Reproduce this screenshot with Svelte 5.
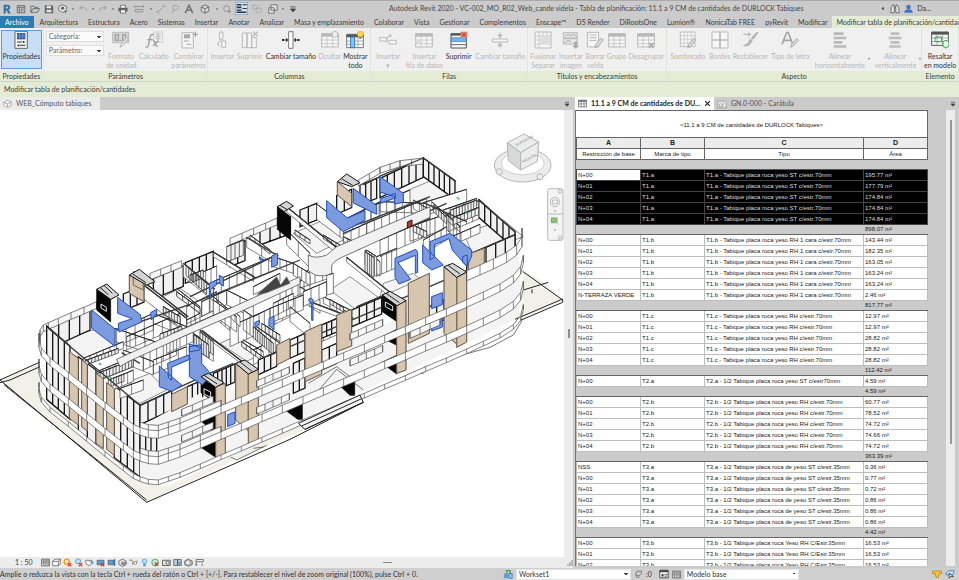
<script>
  // ---- quick access bar -------------------------------------------------
  const g = '#5d6266';
  const icons = {
    revit: '<path d="M4 2h9q7 0 7 6 0 4-4 6l5 9h-6l-4-8H9v8H4z M9 6v5h3q3 0 3-3t-3-2z" fill="#2f6fae" fill-rule="evenodd"/>',
    home: `<path d="M3 4h18v17H3z M3 8h18 M8 8v13 M11 12h7 M11 16h7" fill="none" stroke="${g}" stroke-width="2"/>`,
    open: `<path d="M2 20V5h7l2 3h8v3 M2 20l5-9h16l-5 9z" fill="none" stroke="${g}" stroke-width="2"/>`,
    save: `<path d="M2 3h17l3 3v16H2z" fill="${g}"/><path d="M6 4h11v6H6z M6 14h12v6H6z" fill="#e6e6e6"/>`,
    sync: `<path d="M11 2l9 4v9l-9 5-9-5V6z" fill="#f2f2f2" stroke="${g}" stroke-width="2"/><circle cx="11" cy="10" r="4" fill="${g}"/><path d="M14 16h8l-4 7z" fill="#3a9c4a"/>`,
    undo: '<path d="M4 9h11q6 1 6 8M4 9l6-5M4 9l6 5" fill="none" stroke="#9a9a9a" stroke-width="2"/>',
    redo: '<path d="M20 9H9q-6 1-6 8M20 9l-6-5M20 9l-6 5" fill="none" stroke="#9a9a9a" stroke-width="2"/>',
    print: `<path d="M6 9V3h12v6" fill="#fff" stroke="${g}" stroke-width="2"/><path d="M1 9h22v9H1z" fill="${g}"/><path d="M6 14h12v8H6z" fill="#fff" stroke="${g}" stroke-width="2"/>`,
    measure: '<path d="M1 6h22M1 3v6M23 3v6M3 13h18v6H3z" fill="none" stroke="#8c8c8c" stroke-width="2"/>',
    line: '<path d="M4 20L20 4M1 17l6 6M17 1l6 6" stroke="#8c8c8c" stroke-width="2"/>',
    tag: '<path d="M5 22l5-9M8 13a7 6 0 1 1 6 2z" fill="none" stroke="#999" stroke-width="2"/>',
    letterA: '<path d="M3 22L12 3l9 19M7 15h10" fill="none" stroke="#777" stroke-width="4"/>',
    cube: `<path d="M12 2l9 5v10l-9 5-9-5V7z M3 7l9 5 9-5 M12 12v10" fill="#dcdcdc" stroke="${g}" stroke-width="2"/>`,
    section: '<circle cx="11" cy="11" r="7" fill="none" stroke="#888" stroke-width="2"/><path d="M14 16h8l-4 6z" fill="#888"/>',
    thin: '<path d="M0 0h24v24H0z" fill="#cfe4f7" stroke="#4a90cf" stroke-width="2"/><path d="M3 5h9M3 10h9M3 19h18" stroke="#333" stroke-width="3"/><path d="M14 5h8M14 12h8M3 15h9" stroke="#333" stroke-width="2"/>',
    close: '<path d="M2 3h12v9H2zM10 10h12v11H10z" fill="none" stroke="#999" stroke-width="2" stroke-dasharray="3 2"/>',
    swap: `<path d="M7 2h15v13H7z M2 9h13v13H2z" fill="#e8e8e8" stroke="${g}" stroke-width="2"/>`,
    more: '<path d="M6 7h12M6 12h12l-6 7z" fill="#444" stroke="#444" stroke-width="2"/>',
    arrow: '<path d="M7 10h10l-5 6z" fill="#555"/>',
    binoc: '<path d="M3 9l3-6h4v18H2zM21 9l-3-6h-4v18h8zM10 9h4" fill="#eee" stroke="#555" stroke-width="2"/>',
    user: '<circle cx="12" cy="8" r="6" fill="#3b74c9"/><path d="M1 23q0-9 11-9t11 9z" fill="#3b74c9"/>',
    sheet: '<path d="M2 5h16l4 4v12H2z" fill="#eee" stroke="#999" stroke-width="2"/><path d="M6 12h7v6H6zM15 8v10" fill="none" stroke="#aaa" stroke-width="2"/>',
    grid: '<path d="M1 3h22v18H1z" fill="#fff" stroke="#555" stroke-width="2"/><path d="M1 3h22v5H1z" fill="#6f7f8f"/><path d="M1 13h22M8 8v13M16 8v13" stroke="#777" stroke-width="2"/>',
    back: '<path d="M16 6v12l-7-6z" fill="#333"/>',
    x: '<path d="M4 4l16 16M20 4L4 20" stroke="#222" stroke-width="4"/>',
    house: '<path d="M2 9l10-6 10 5v9l-10 6-10-6z M12 13v9 M2 9l10 4 10-5" fill="#f5f5f5" stroke="#999" stroke-width="2"/>',
    // view control bar
    pattern: '<path d="M1 3h22v18H1z" fill="#ddd" stroke="#555" stroke-width="2"/><path d="M1 8h22M1 13h22M7 3v18M13 3v18M19 3v18" stroke="#777" stroke-width="2"/>',
    box: '<path d="M2 9l5-6h15v11l-5 7H2z M2 9h15v12 M17 9l5-6" fill="#fff" stroke="#555" stroke-width="2"/>',
    sun: '<circle cx="10" cy="10" r="7" fill="#ffe9a8" stroke="#e69a20" stroke-width="3"/><path d="M13 13l9 9m0-9l-9 9" stroke="#d43a2c" stroke-width="3"/>',
    shadow: '<circle cx="11" cy="9" r="7" fill="#bfe0f5" stroke="#5a8aa8" stroke-width="2"/><path d="M13 13l9 9m0-9l-9 9" stroke="#d43a2c" stroke-width="3"/>',
    teapot: '<path d="M2 6h10v3l6-3v5q0 9-7 9-8 0-9-8z" fill="#fff" stroke="#555" stroke-width="2"/><circle cx="19" cy="12" r="4" fill="#5aa9e6"/>',
    cropx: '<path d="M3 6h18v12H3z" fill="#5aa0d8" stroke="#555" stroke-width="2"/><path d="M13 13l9 9m0-9l-9 9" stroke="#d43a2c" stroke-width="3"/>',
    crop: '<path d="M3 6h14v12H3z" fill="#5aa0d8" stroke="#555" stroke-width="2"/><path d="M20 3v18" stroke="#2f72b5" stroke-width="4"/>',
    lock: '<path d="M2 8l10-5 10 5v9l-10 6-10-6z" fill="#e4e4e4" stroke="#555" stroke-width="2"/><path d="M9 10h12v9H9z" fill="#8a8a8a"/>',
    glasses: '<path d="M1 6q8-3 10 6 6 8 11-5M11 12l-2 6" fill="none" stroke="#555" stroke-width="2"/><circle cx="17" cy="13" r="4" fill="#fff" stroke="#777" stroke-width="2"/>',
    bulb: '<circle cx="12" cy="9" r="6" fill="#bfe3ff" stroke="#3f93d6" stroke-width="2"/><path d="M9 16h6v6H9z" fill="#4f8fc0"/>',
    world: '<circle cx="11" cy="12" r="9" fill="#cfe9d2" stroke="#3c8f52" stroke-width="2"/><path d="M10 12l9 9m0-9l-9 9" stroke="#d43a2c" stroke-width="3"/>',
    cam: '<path d="M1 6h21v14H1z" fill="#ddd" stroke="#444" stroke-width="2"/><circle cx="15" cy="13" r="4" fill="#fff" stroke="#444" stroke-width="2"/>',
    blocks: '<path d="M2 4h10v16H2z M12 4h10v16H12z" fill="#bfc8d0" stroke="#555" stroke-width="2"/><circle cx="17" cy="13" r="4" fill="#4f9ad8"/>',
    shapes: '<path d="M2 8l9-5 11 5v9l-9 5-11-4z" fill="#b9b9b9" stroke="#555" stroke-width="2"/><circle cx="10" cy="12" r="4" fill="#fff"/>',
    dims: '<path d="M3 21V4h19v6M3 10h19M1 18h5M19 14v8" fill="none" stroke="#555" stroke-width="2"/>',
    users: '<path d="M9 12V4h8v6" fill="none" stroke="#4a9a50" stroke-width="3"/><path d="M2 11h10v11H2z" fill="#5aa0d8"/><path d="M14 11h8v11h-8z" fill="#9ac7e8" stroke="#2d78b8" stroke-width="2"/>',
    link: '<path d="M8 3h12v6l-6 6H5v-5z M5 17q6 6 10 1" fill="#ccc" stroke="#666" stroke-width="2"/>',
    option: '<path d="M2 3h20v18H2z" fill="#fff" stroke="#333" stroke-width="2"/><path d="M2 3h20v5H2z M6 12h5v6H6z" fill="#444"/><path d="M13 13h7M13 17h7" stroke="#444" stroke-width="2"/>',
    filterY: '<path d="M1 5h22v6h-6l-2 9h-5L8 11H1z" fill="#ffc83a" stroke="#b8820c" stroke-width="2"/>',
    pick: '<path d="M2 9l7-5h13l-3 10H2z" fill="#bfe0f5" stroke="#3b86bd" stroke-width="2"/><path d="M10 10v12l4-4h6z" fill="#fff" stroke="#333" stroke-width="2"/>'
  };

  // ---- ribbon glyphs, drawn on a 54 unit square -------------------------
  const t = '#b9b9b9';
  const sheetG = (c) => `<path d="M2 8h50v40H2z" fill="#f6f6f6" stroke="${c}" stroke-width="3"/><path d="M2 8h50v9H2z" fill="${c}"/><path d="M2 27h50M2 38h50M18 17v31M35 17v31" stroke="${c}" stroke-width="2"/>`;
  const big = {
    props: '<path d="M9 1h37v51H9z" fill="#f7f7f7" stroke="#666" stroke-width="3"/><path d="M15 6h25v19H15z" fill="#27579a"/><path d="M15 12h25M15 18h25M23 6v19M32 6v19" stroke="#7fa6d8" stroke-width="2"/><path d="M15 33h16M24 43h16" stroke="#333" stroke-width="3"/><path d="M33 29v8l7-4zM22 39v8l-7-4z" fill="#333"/>',
    format: `<path d="M2 4h48v31H2z" fill="#d6d6d6" stroke="${t}" stroke-width="3"/><path d="M10 11h9v17h-9zM32 11h9v17h-9z" fill="none" stroke="#a0a0a0" stroke-width="4"/><path d="M25 27v3" stroke="#999" stroke-width="4"/><path d="M50 22L32 44l-8 5 3-9 16-20z" fill="#e8e8e8" stroke="${t}" stroke-width="3"/>`,
    fx: `<path d="M26 3h26v30H26z" fill="#f4f4f4" stroke="${t}" stroke-width="2"/><path d="M31 9h16M31 16h16M31 23h16M39 9v22" stroke="${t}" stroke-width="3"/><path d="M26 12q-8-5-10 5l-6 26q-2 8-8 4M7 26h16M24 29q5 0 7 9t8 7M40 29L24 45" fill="none" stroke="#9c9c9c" stroke-width="4"/>`,
    combine: `<path d="M6 5h34v46H6z" fill="#f6f6f6" stroke="${t}" stroke-width="3"/><path d="M12 10h18v12H12z" fill="#aaa"/><path d="M12 30h15M20 40h14" stroke="#aaa" stroke-width="3"/><path d="M46 2v16M38 10h16" stroke="#a5a5a5" stroke-width="4"/>`,
    insCol: `<path d="M20 3h10v22H20zM26 30h12v19H26z" fill="#f4f4f4" stroke="${t}" stroke-width="3"/><path d="M18 46l-4-10 12-10" fill="none" stroke="${t}" stroke-width="3"/>`,
    delCol: `<path d="M4 6h14v44H4zM18 6h14v44H18zM32 20h14v30H32z" fill="#f4f4f4" stroke="${t}" stroke-width="3"/><path d="M36 2l14 14M50 2L36 16" stroke="${t}" stroke-width="4"/>`,
    widthCol: '<path d="M20 2h13v50H20z" fill="#fdfdfd" stroke="#777" stroke-width="3"/><path d="M4 27h12M37 27h12" stroke="#333" stroke-width="3"/><path d="M12 20v14l7-7zM42 20v14l-7-7z" fill="#333"/><circle cx="3" cy="27" r="3"/><circle cx="50" cy="27" r="3"/>',
    hide: sheetG(t) + `<circle cx="42" cy="10" r="9" fill="#eee" stroke="${t}" stroke-width="3"/>`,
    show: '<path d="M2 10h50v40H2z" fill="#fff" stroke="#777" stroke-width="3"/><path d="M2 10h50v9H2z" fill="#585858"/><path d="M2 30h50M2 40h50M36 18v32" stroke="#888" stroke-width="2"/><path d="M14 18h12v32H14z" fill="#8cc4ef" stroke="#2b7ec2" stroke-width="3"/><circle cx="43" cy="9" r="9" fill="#ffd64a" stroke="#e0a31c" stroke-width="2"/><path d="M40 18h6v6h-6z" fill="#777"/>',
    insRow: `<path d="M2 20h20v10H2zM30 28h22v11H30z" fill="#f6f6f6" stroke="${t}" stroke-width="3"/><path d="M24 34V18l12-4M32 8l6 6-6 5" fill="none" stroke="${t}" stroke-width="3"/>`,
    data: sheetG(t) + '<path d="M2 26h14v12H2z" fill="#ddd"/>',
    delRow: '<path d="M3 8h46v43H3z" fill="#fff" stroke="#555" stroke-width="3"/><path d="M3 8h46v6H3z" fill="#555"/><path d="M3 20h46v12H3z" fill="#74b4ea" stroke="#3c7fb8" stroke-width="2"/><path d="M3 41h46" stroke="#666" stroke-width="3"/><path d="M32 2h20v18H32z" fill="#e88473"/><path d="M36 5l12 12M48 5L36 17" stroke="#b32e1c" stroke-width="3"/>',
    heightRow: `<path d="M4 24h46v9H4z" fill="#f6f6f6" stroke="${t}" stroke-width="3"/><path d="M27 4v12M27 38v12M21 12h12l-6 8zM21 44h12l-6-8z" fill="${t}" stroke="${t}" stroke-width="3"/>`,
    merge: `<path d="M3 3h48v48H3z" fill="#f6f6f6" stroke="${t}" stroke-width="3"/><path d="M3 15h48M15 3v48M15 39h36M39 3v12M27 3v12M3 27h12M3 39h12" stroke="${t}" stroke-width="2"/><path d="M17 17h32v20H17z" fill="#dedede"/>`,
    image: `<path d="M4 5h42v16H4zM4 23h42v16H4z" fill="#e6e6e6" stroke="${t}" stroke-width="3"/><path d="M8 18l10-9 9 6 8-6 9 8M8 36l10-8 9 5" fill="none" stroke="#aaa" stroke-width="3"/><path d="M36 32v12h-6l11 9 11-9h-6V32z" fill="#aaa"/>`,
    clear: `<path d="M4 4h34v44H4z" fill="#f6f6f6" stroke="${t}" stroke-width="3"/><path d="M10 12h22M10 20h22M10 28h22" stroke="${t}" stroke-width="3"/><path d="M52 26L36 46l-9 4 2-9 15-19z" fill="#ddd" stroke="#aaa" stroke-width="3"/>`,
    group: sheetG(t),
    ungroup: sheetG(t) + '<path d="M36 36l14 14M50 36L36 50" stroke="#a5a5a5" stroke-width="4"/>',
    shade: '<path d="M4 3h44v44H4z" fill="#f6f6f6" stroke="#c0c0c0" stroke-width="3"/><path d="M4 14h44M4 25h44M4 36h44M15 3v44M26 3v44M37 3v44" stroke="#c4c4c4" stroke-width="2"/><path d="M50 26L36 46l-9 4 2-9 15-19z" fill="#ddd" stroke="#aaa" stroke-width="3"/>',
    borders: `<path d="M3 3h48v48H3z" fill="#f6f6f6" stroke="${t}" stroke-width="3"/><path d="M27 3v48M3 27h48" stroke="${t}" stroke-width="5"/>`,
    reset: `<path d="M4 10h20l-5-5M24 10l-5 6" fill="none" stroke="${t}" stroke-width="4"/><path d="M50 4L34 26l-8-4L44 3zM32 28l-9-5-5 12-16 10q22 6 30-17z" fill="#b4b4b4"/>`,
    font: '<path d="M3 40L17 5h5l13 35M9 28h20" fill="none" stroke="#a8a8a8" stroke-width="5"/><path d="M52 28L38 44l-9 5 3-9 15-17z" fill="#ddd" stroke="#aaa" stroke-width="3"/>',
    alignH: '<path d="M8 4h30v8H8zM8 17h38v8H8zM8 30h26v8H8zM8 43h38v7H8z" fill="#b9b9b9"/>',
    alignV: '<path d="M14 4h26v8H14zM8 17h38v8H8zM14 30h26v8H14zM10 43h34v7H10z" fill="#bdbdbd"/>',
    model: '<path d="M2 3h50v40H2z" fill="#fff" stroke="#555" stroke-width="3"/><path d="M2 3h50v8H2z" fill="#555"/><path d="M2 21h50M2 32h50M18 11v32M35 11v32" stroke="#888" stroke-width="2"/><path d="M12 18h20v14H12z" fill="none" stroke="#39a047" stroke-width="3"/><path d="M36 32l9-4 9 5v12l-9 6-9-5z" fill="#e8f7ea" stroke="#39a047" stroke-width="3"/>'
  };

  const quick = ['revit', 'home', 'open', 'save', 'sync', 'arrow', 'undo', 'arrow', 'redo', 'arrow', 'print', 'measure', 'arrow', 'line', 'tag', 'letterA', 'cube', 'arrow', 'section', 'thin', 'close', 'swap', 'arrow', 'more'];
  const wide = new Set(['measure', 'cube', 'close']);

  const tabs = ['Arquitectura', 'Estructura', 'Acero', 'Sistemas', 'Insertar', 'Anotar', 'Analizar', 'Masa y emplazamiento', 'Colaborar', 'Vista', 'Gestionar', 'Complementos', 'Enscape™', 'D5 Render', 'DiRootsOne', 'Lumion®', 'NonicaTab FREE', 'pyRevit', 'Modificar'];

  // size is the share of the ribbon width
  const panels = [
    { title: 'Propiedades', size: 43, items: [{ icon: 'props', size: 43, label: ['Propiedades'], on: true, active: true }] },
    { title: 'Parámetros', size: 165, fields: ['Categoría:', 'Parámetro:'], items: [
      { icon: 'format', size: 34, label: ['Formato', 'de unidad'] },
      { icon: 'fx', size: 33, label: ['Calculado'] },
      { icon: 'combine', size: 39, label: ['Combinar', 'parámetros'] }] },
    { title: 'Columnas', size: 163, items: [
      { icon: 'insCol', size: 28, label: ['Insertar'] },
      { icon: 'delCol', size: 27, label: ['Suprimir'] },
      { icon: 'widthCol', size: 56, label: ['Cambiar tamaño'], on: true },
      { icon: 'hide', size: 22, label: ['Ocultar'] },
      { icon: 'show', size: 30, label: ['Mostrar', 'todo'], on: true }] },
    { title: 'Filas', size: 157, items: [
      { icon: 'insRow', size: 34, label: ['Insertar', '▾'] },
      { icon: 'data', size: 39, label: ['Insertar', 'fila de datos'] },
      { icon: 'delRow', size: 30, label: ['Suprimir'], on: true },
      { icon: 'heightRow', size: 54, label: ['Cambiar tamaño'] }] },
    { title: 'Títulos y encabezamientos', size: 139, items: [
      { icon: 'merge', size: 30, label: ['Fusionar', 'Separar'] },
      { icon: 'image', size: 26, label: ['Insertar', 'imagen'] },
      { icon: 'clear', size: 23, label: ['Borrar', 'celda'] },
      { icon: 'group', size: 20, label: ['Grupo'] },
      { icon: 'ungroup', size: 40, label: ['Desagrupar'] }] },
    { title: 'Aspecto', size: 256, items: [
      { icon: 'shade', size: 42, label: ['Sombreado'] },
      { icon: 'borders', size: 22, label: ['Bordes'] },
      { icon: 'reset', size: 40, label: ['Restablecer'] },
      { icon: 'font', size: 40, label: ['Tipo de letra'] },
      { icon: 'alignH', size: 60, label: ['Alinear', 'horizontalmente'], drop: true },
      { icon: 'alignV', size: 52, label: ['Alinear', 'verticalmente'], drop: true }] },
    { title: 'Elemento', size: 36, items: [{ icon: 'model', size: 36, label: ['Resaltar', 'en modelo'], on: true }] }
  ];

  // ---- schedule ---------------------------------------------------------
  const levels = ['N+00', 'N+01', 'N+02', 'N+03', 'N+04'];
  const groups = [
    { mark: 'T1.a', type: 'T1.a - Tabique placa roca yeso ST c/estr.70mm', levels, areas: ['195.77', '177.79', '174.84', '174.84', '174.84'], total: '898.07', selected: true },
    { mark: 'T1.b', type: 'T1.b - Tabique placa roca yeso RH 1 cara c/estr.70mm', levels: [...levels, 'N-TERRAZA VERDE'], areas: ['143.44', '182.35', '163.05', '163.24', '163.24', '2.46'], total: '817.77' },
    { mark: 'T1.c', type: 'T1.c - Tabique placa roca yeso RH c/estr.70mm', levels, areas: ['12.97', '12.97', '28.82', '28.82', '28.82'], total: '112.42' },
    { mark: 'T2.a', type: 'T2.a - 1/2 Tabique placa roca yeso ST c/estr70mm', levels: ['N+00'], areas: ['4.59'], total: '4.59' },
    { mark: 'T2.b', type: 'T2.b - 1/2 Tabique placa roca yeso RH c/estr.70mm', levels, areas: ['60.77', '78.52', '74.72', '74.66', '74.72'], total: '363.39' },
    { mark: 'T3.a', type: 'T3.a - 1/2 Tabique placa roca de yeso ST c/estr.35mm', levels: ['NSS', ...levels], areas: ['0.36', '0.77', '0.72', '0.86', '0.86', '0.86'], total: '4.42' },
    { mark: 'T3.b', type: 'T3.b - 1/2 Tabique placa roca Yeso RH C/Estr.35mm', levels: ['N+00', 'N+01', 'N+02'], areas: ['16.53', '16.53', '16.53'] }
  ];

  // ---- isometric model --------------------------------------------------
  // A wall runs along its top edge (x1,y1)-(x2,y2), drops h, and has n bays.
  function wall([x1, y1, x2, y2, h, n = 1]) {
    let d = `M${x1} ${y1}L${x2} ${y2}v${h}L${x1} ${y1 + h}z`;
    for (let i = 1; i < n; i++) {
      const k = i / n;
      d += `M${Math.round(x1 + (x2 - x1) * k)} ${Math.round(y1 + (y2 - y1) * k)}v${h}`;
    }
    return d;
  }
  const cap = ([x1, y1, x2, y2]) => `M${x1} ${y1}L${x2} ${y2}`;

  // A band follows a run of points, with a post at every point.
  function band(pts, dy, h) {
    const top = pts.map(([x, y]) => `${x} ${y + dy}`);
    const low = pts.map(([x, y]) => `${x} ${y + dy + h}`).reverse();
    return `M${top.join('L')}L${low.join('L')}z` + pts.map(([x, y]) => `M${x} ${y + dy}v${h}`).join('');
  }

  const along = (x1, y1, x2, y2, n) =>
    Array.from({ length: n + 1 }, (_, i) => [Math.round(x1 + ((x2 - x1) * i) / n), Math.round(y1 + ((y2 - y1) * i) / n)]);

  const westRun = [[117, 985], [117, 1005], [124, 1030], [150, 1060], [205, 1103], [260, 1148], [315, 1193], [370, 1236], [400, 1259]];
  const corner = [[420, 1268], [445, 1276], [475, 1278], [505, 1268]];
  const frontRun = along(540, 1256, 1400, 885, 14);
  const eastRun = [[1450, 862], [1500, 838], [1540, 812], [1562, 785], [1570, 752]];
  const parapet = [...westRun, ...corner, ...frontRun, ...eastRun];
  const cornerRail = [...corner, ...frontRun.slice(0, 3)];
  const eastTop = [[1400, 812], [1440, 795], [1480, 777], [1520, 757], [1550, 735], [1566, 710], [1566, 684]];
  const backRail = [[120, 1010], [120, 990], [130, 975], [145, 968], ...along(175, 955, 290, 905, 3)];

  // balcony balustrades set back from the slab edge
  const balconies = [
    along(545, 1228, 640, 1188, 3), along(545, 1306, 640, 1266, 3),
    along(770, 1142, 868, 1100, 4), along(770, 1222, 868, 1180, 4),
    along(1050, 1000, 1148, 958, 4), along(1050, 1078, 1148, 1036, 4),
    along(1230, 995, 1320, 955, 3)
  ];

  // kind, origin x, origin y, list of walls
  const shell = [
    ['glass', 0, 420, [[145, 565, 270, 508, 62, 4], [370, 462, 432, 436, 50, 3], [460, 415, 550, 377, 62, 3], [556, 368, 640, 334, 62, 4], [690, 320, 735, 302, 60, 2], [780, 265, 870, 232, 50, 3]]],
    ['rail', 0, 420, [[450, 400, 545, 362, 20, 3], [690, 295, 832, 234, 20, 4]]],
    ['glass', 840, 390, [[60, 240, 110, 220, 50, 2], [170, 197, 215, 178, 55, 2], [240, 165, 290, 145, 60, 3], [300, 145, 430, 84, 58, 6]]],
    ['rail', 840, 390, [[235, 150, 300, 112, 18, 2], [300, 112, 360, 92, 18, 2], [360, 92, 430, 84, 18, 2]]],
    ['glass', 840, 390, [[430, 84, 525, 152, 56, 6], [596, 210, 705, 305, 52, 6]]]
  ];

  const rooms = [
    ['plain', 0, 420, [
      [432, 436, 560, 535, 42, 1], [400, 400, 560, 528, 8, 1], [550, 370, 640, 442, 40, 4], [640, 336, 760, 410, 14, 3], [740, 292, 830, 345, 30, 2],
      [600, 400, 650, 378, 44, 3], [640, 425, 735, 385, 44, 4], [735, 385, 830, 345, 44, 4], [560, 500, 650, 455, 52, 4], [530, 445, 600, 500, 22, 3],
      [350, 570, 460, 520, 50, 4], [460, 520, 560, 560, 30, 2], [380, 590, 540, 520, 40, 6], [490, 500, 540, 535, 30, 3], [345, 565, 480, 610, 40, 3],
      [605, 485, 680, 450, 44, 3], [680, 450, 760, 490, 44, 2], [760, 440, 840, 400, 24, 1], [640, 470, 700, 520, 60, 5], [560, 540, 600, 520, 40, 3]]],
    ['plain', 840, 390, [
      [20, 230, 165, 350, 16, 1], [110, 222, 180, 275, 46, 1], [190, 270, 300, 215, 44, 4], [250, 240, 390, 180, 40, 6], [300, 215, 440, 220, 30, 3],
      [190, 310, 260, 280, 36, 3], [260, 280, 440, 205, 38, 8], [400, 210, 450, 240, 26, 2], [300, 330, 450, 265, 50, 6], [390, 290, 490, 255, 44, 4],
      [255, 360, 300, 395, 44, 3], [290, 380, 350, 355, 58, 4], [430, 330, 500, 290, 40, 4], [200, 382, 340, 495, 14, 1],
      [60, 430, 150, 400, 44, 4], [0, 480, 90, 440, 40, 5], [60, 470, 120, 510, 40, 3], [130, 500, 220, 545, 20, 3], [20, 300, 90, 370, 44, 2],
      [430, 218, 560, 178, 40, 1], [455, 215, 540, 290, 16, 4], [490, 240, 590, 205, 20, 5], [505, 250, 596, 212, 55, 5], [515, 320, 600, 283, 26, 3], [500, 250, 540, 290, 48, 4]]],
    ['plain', 0, 990, [
      [250, 85, 370, 35, 20, 6], [290, 125, 400, 80, 30, 6], [330, 150, 400, 120, 34, 4], [360, 175, 430, 150, 30, 2], [370, 60, 460, 95, 40, 3], [430, 70, 530, 25, 50, 5], [460, 90, 560, 50, 42, 4],
      [500, 40, 580, 5, 30, 4], [580, 10, 640, 50, 44, 5], [600, 0, 760, 120, 8, 1], [690, -10, 790, -55, 60, 4], [730, 30, 790, 65, 24, 3], [730, -60, 830, 10, 60, 5],
      [780, -45, 870, -90, 50, 4], [760, 60, 830, 25, 44, 3]]],
    ['plain', 510, 660, [
      [180, 262, 210, 290, 30, 2], [250, 290, 300, 265, 50, 3], [300, 265, 400, 225, 44, 4], [310, 250, 370, 220, 40, 4], [400, 215, 470, 185, 44, 3], [420, 245, 540, 290, 14, 1],
      [360, 260, 420, 310, 44, 1], [260, 320, 330, 370, 40, 5], [130, 240, 200, 290, 46, 4], [370, 130, 420, 160, 36, 4], [310, 110, 370, 130, 30, 3], [470, 165, 490, 160, 60, 1],
      [480, 250, 540, 280, 14, 3], [420, 330, 500, 295, 50, 4], [560, 260, 635, 228, 50, 4], [590, 90, 620, 110, 60, 4]]],
    // kitchens and wet rooms
    ['dense', 510, 660, [
      [48, 135, 110, 190, 32, 8], [60, 165, 100, 150, 24, 5], [250, 320, 310, 370, 34, 9], [275, 310, 330, 345, 20, 5], [90, 335, 130, 365, 40, 5], [170, 80, 220, 60, 46, 4],
      [20, 215, 90, 265, 14, 4], [215, 365, 285, 415, 14, 5], [585, 95, 612, 112, 60, 4], [480, 238, 520, 262, 14, 4], [375, 30, 420, 60, 12, 3], [240, 45, 300, 90, 12, 4]]],
    ['dense', 840, 390, [
      [460, 225, 500, 262, 20, 5], [512, 240, 590, 210, 26, 9], [520, 262, 596, 232, 22, 7], [190, 320, 240, 345, 14, 4], [130, 315, 180, 345, 12, 4], [400, 285, 440, 305, 20, 4]]],
    ['dense', 0, 990, [
      [255, 92, 355, 55, 14, 10], [292, 130, 395, 90, 22, 11], [325, 150, 372, 132, 22, 6], [582, 14, 626, 44, 40, 6], [480, 12, 545, -12, 24, 6], [490, -70, 540, -40, 22, 6]]],
    ['glass', 840, 390, [[560, 376, 705, 314, 62, 5]]],
    ['glass', 0, 990, [[420, 226, 515, 182, 58, 4], [562, 170, 608, 150, 52, 3], [640, 138, 705, 108, 30, 4]]],
    ['glass', 510, 660, [[130, 460, 195, 432, 54, 5], [265, 420, 320, 395, 44, 3], [360, 360, 405, 340, 55, 2], [455, 315, 500, 296, 40, 3], [545, 270, 635, 232, 50, 4]]]
  ];

  // main partitions and party walls, drawn as a heavy cut line
  const cuts = 'M432 856L560 955M400 822L565 950M550 790L645 868M640 756L765 832M740 712L835 768M860 620L1010 742M1040 772L1180 885M605 990L770 1118M930 905L1060 955M1270 608L1400 665M350 990L565 915 900 780M570 890L830 765M1030 690L1290 590M1100 715L1340 610M365 1058L420 1090M420 1216L620 1124 700 1090M800 1070L1400 812M1270 474L1368 545M1436 598L1548 698M1400 768L1545 704M1136 530L1270 474M1090 555L1140 530M145 985L420 1216M520 1000L690 925';

  const westFace = [
    ['glass', 60, 870, [[80, 108, 150, 168, 220, 4], [175, 200, 228, 240, 225, 2], [283, 288, 360, 346, 215, 4]]]
  ];
  const southFace = [
    [420, 1300, 470, 1312, 50, 3], [880, 1090, 915, 1074, 90, 2], [965, 1050, 1010, 1030, 60, 2], [1288, 920, 1332, 900, 60, 2]
  ];

  // upright panels: tan cladding on both faces
  const tanParts = [
    [388, 825, 432, 850, 55], [400, 815, 430, 830, 40],
    [1012, 545, 1055, 580, 40],
    [208, 1055, 235, 1075, 200], [245, 1080, 262, 1093, 200], [288, 1120, 310, 1136, 210], [320, 1148, 343, 1166, 200],
    [515, 1183, 562, 1160, 52],
    [707, 1090, 745, 1122, 170], [745, 1122, 775, 1108, 220], [647, 1160, 676, 1150, 215],
    [830, 1035, 870, 1015, 60], [915, 995, 965, 972, 150], [1010, 945, 1055, 928, 110],
    [1190, 910, 1218, 900, 210], [1225, 850, 1288, 820, 180], [1332, 800, 1370, 832, 200], [1370, 832, 1400, 816, 210], [1405, 762, 1453, 745, 62]
  ];
  const tanWalls = tanParts.map(wall).join('');
  // fine vertical boarding over the cladding
  const boards = tanParts.map(([x1, y1, x2, y2, h]) => wall([x1, y1, x2, y2, h, Math.max(2, Math.round(Math.abs(x2 - x1) / 6))])).join('');

  const blacks = [
    'M290 868l42 30v68l-42 -36z', 'M832 620l40 30v70l-40 -32z',
    'M603 1130l44 32v46l-44 -30z', 'M603 1262l44 -20v62z', 'M600 1340l47 -20v52z',
    'M1147 885l44 32v48l-44 -30z', 'M1144 1012l46 -24v48z', 'M1144 1088l46 -22v56z',
    'M853 1228l40 -18 14 -6v54h-14z', 'M1010 1148l40 -18 14 -6v62h-14z'
  ];

  const blues = [
    'M980 602l62 52 53 -22v28l-65 35 -50 -42z', 'M1060 565l70 52v26l-70 -34z', 'M1140 530l70 50v27l-26 5v-22l-44 -14z', 'M1142 596l44 -16 v14l-44 16z',
    'M1185 775l62 -27 6 9v60l-7 3v-54l-52 22 38 50 -35 14 -12 -20z', 'M1268 735l62 60 -35 15 -27 -22z', 'M1290 725l60 -25 65 50v18l-14 32 -44 -50 -10 -34 -44 18v38l-13 8z',
    'M1295 890l32 -12v36l-32 12z', 'M1295 965l32 -12v28l-32 12z', 'M1388 770l14 -5v32l-14 -10z',
    'M275 930l70 57v52l-70 -54z', 'M353 892l68 52 4 22 -68 30 -2 -26 42 -14 -44 -16z', 'M452 938l18 -10v12l-16 20z',
    'M628 850l22 -10v14l-18 14v24h-4z', 'M658 826l12 6v26l-12 -8z', 'M815 768l18 -8v34l-18 8z', 'M778 770l14 10h-12z',
    'M764 968l14 -7v10l-12 12z', 'M807 956l15 -8v42l-15 -14z', 'M568 1040l38 -6 -8 16 -30 6z', 'M930 894l9 5v62h-4v-52l-10 -8z',
    'M478 1098l68 58 -30 18 -38 -14z', 'M503 1090l62 -25 6 12 -56 24v40l-10 -8z', 'M568 1032l37 12v46l30 34 -28 30 -39 -24z', 'M683 1244l22 -8v34l-22 10z'
  ];

  const floors = [
    'M210 1010l75 -22 60 50v20l-70 30 -90 -30z', 'M480 895l60 -30 80 55 -60 30z', 'M880 700l90 -40 60 60 -80 40z', 'M1180 590l140 -60 40 70 -60 30z',
    'M1390 700l120 -40 60 50 -150 55z', 'M990 870l60 -40 110 80 -70 36z', 'M660 1030l80 -36 80 50 -80 40z', 'M400 1140l50 -20 50 50 -80 40 -60 -20z', 'M1150 850l90 -30 20 18 -120 54z'
  ];

  let scheme = $state('Modelo base');
  let workset = $state('Workset1');
</script>

{#snippet ico(name, size = 8)}
  <svg class="ico" width={size} height={size} viewBox="0 0 24 24" aria-hidden="true">{@html icons[name]}</svg>
{/snippet}

<div class="app">
  <header class="titlebar">
    <div class="quick">
      {#each quick as name}
        <button class:wide={wide.has(name)} class:tiny={name === 'arrow'} aria-label={name}>{@render ico(name, name === 'arrow' ? 6 : name === 'thin' ? 13 : 10)}</button>
      {/each}
    </div>
    <h1>Autodesk Revit 2020 - VC-002_MO_R02_Web_cande videla - Tabla de planificación: 11.1 a 9 CM de cantidades de DURLOCK Tabiques</h1>
    <div class="account">
      {@render ico('back', 7)}
      {@render ico('binoc', 10)}
      {@render ico('user', 9)}
      <span>Da...</span>
    </div>
  </header>

  <nav class="tabs">
    <a class="file" href="#archivo">Archivo</a>
    {#each tabs as tab}<a href="#{tab}">{tab}</a>{/each}
    <a class="current" href="#tabla">Modificar tabla de planificación/cantidades</a>
  </nav>

  <div class="ribbon">
    {#each panels as panel}
      <section style="flex-grow: {panel.size}">
        <div class="tools">
          {#if panel.fields}
            <div class="fields">
              {#each panel.fields as f}
                <select aria-label={f}><option>{f}</option></select>
              {/each}
            </div>
          {/if}
          {#each panel.items as it}
            <button class="tool" class:on={it.on} class:active={it.active} class:drop={it.drop} style="flex-grow: {it.size}">
              <svg width="18" height="18" viewBox="0 0 54 54" aria-hidden="true">{@html big[it.icon]}</svg>
              {#each it.label as l}<span>{l}</span>{/each}
            </button>
          {/each}
        </div>
        <h2>{panel.title}</h2>
      </section>
    {/each}
  </div>

  <div class="context">Modificar tabla de planificación/cantidades</div>

  <main>
    <section class="pane model">
      <div class="doctabs">
        <button class="doc soft">{@render ico('house', 9)}<span>WEB_Cómputo tabiques</span></button>
        <button class="menu" aria-label="Vistas">{@render ico('more', 8)}</button>
      </div>
      <div class="stage">
        <div class="canvas">
          <svg class="iso" viewBox="0 330 1692 1341" preserveAspectRatio="xMinYMin slice" role="img" aria-label="Vista 3D del edificio">
            <path class="ground" d="M0 1140L120 1086 700 1000 1000 1200 915 1288 704 1380 440 1507z" />
            <path class="ground" d="M1565 812L1640 850 1688 903 1545 965z" />
            <path class="edge" d="M0 1140L120 1086M0 1148L30 1140 120 1100M12 1154L440 1500M440 1507L870 1318 1090 1207M0 1140L440 1507M1545 958L1688 897v10L1545 968M1565 812L1688 900M1570 870L1645 847M1596 880L1596 868" />
            <path class="line" d="M1070 1195L1230 1120 1270 1120 1285 1100 1360 1072 1470 1042 1540 1005 1566 962M1232 1114L1262 1114 1280 1094M690 1370l20 10 90 -44M760 1345l30 -4" />
            <path class="body" d="M118 990L145 968 290 905V868L320 852 355 885 388 825 430 815 545 782 690 715 832 654V620L862 605 1010 545 1040 522 1075 540 1200 482 1270 470 1365 540 1400 570V600L1430 595 1545 695 1568 740V930L1400 1040 500 1460 420 1440 120 1180z" />

            <path class="floor" d={floors.join('')} />
            {#each shell as [kind, ox, oy, list]}
              <path class={kind} transform="translate({ox} {oy})" d={list.map(wall).join('')} />
            {/each}
            <path class="rail" d={band(backRail, 0, 20)} />
            {#each westFace as [kind, ox, oy, list]}
              <path class={kind} transform="translate({ox} {oy})" d={list.map(wall).join('')} />
            {/each}
            {#each rooms as [kind, ox, oy, list]}
              <path class={kind} transform="translate({ox} {oy})" d={list.map(wall).join('')} />
              <path class="cap" transform="translate({ox} {oy})" d={list.map(cap).join('')} />
            {/each}
            <path class="cut" d={cuts} />

            <!-- corridor -->
            <path class="hall" d="M350 1078L520 1000 690 925 900 830v22L700 945 560 1005 385 1085 360 1100z" />
            <path class="hall" d="M925 765Q945 778 980 765L1010 740 1290 620v32L1030 770Q995 785 995 800v20Q975 832 945 825L925 812z" />
            <path class="stair" d="M770 885L830 830 842 855 860 830 870 850 800 878z" />

            <!-- balcony floors between the slab edges -->
            <path class="recess" d="M420 1285L520 1250 640 1195 900 1085 1150 975 1400 862 1562 790V925L1540 960 1400 1030 500 1440 420 1430z" />
            <path class="recess" d="M440 1270L600 1180 620 1210 500 1270zM1400 840L1555 765 1560 800 1400 875z" />
            <path class="glass" d={southFace.map(wall).join('')} />
            <path class="line" d="M940 1190L1010 1108 1090 1170M925 1150L1010 1100 1050 1130" />
            <path class="black" d={blacks.join('')} />
            <path class="tan" d={tanWalls} />
            <path class="board" d={boards} />
            <path class="blue" d={blues.join('')} />
            <path class="rail" d={balconies.map((b) => band(b, 0, 20)).join('')} />

            <path class="wallband" d={band(parapet, 162, 14)} />
            <path class="rail" d={band(cornerRail, 76, 20)} />
            <path class="wallband" d={band(parapet, 92, 23)} />
            <path class="rail" d={band(cornerRail, -2, 20)} />
            <path class="wallband" d={band(parapet, 14, 23)} />
            <path class="wallband" d={band(eastTop, 0, 30)} />

            <path class="shaft" d="M290 868L320 852 357 885 332 898zM388 825L418 808 465 845 440 855zM603 1130L625 1120 672 1148 647 1162zM832 620L860 604 880 618 852 635zM707 1090L735 1080 775 1108 745 1122zM1147 885L1170 874 1218 902 1191 917zM1012 545L1040 522 1080 548 1055 560zM1332 800L1358 790 1400 816 1370 832z" />
            <path class="edge" d="M300 862l25 22M312 856l25 24M612 1126l40 26M1158 880l40 28M840 616l24 14M720 1086l36 28M1344 796l36 26M398 822l40 26M1024 536l34 20" />
            <path class="slot" d="M612 1166l20 10v16l-20 -10zM1156 906l22 12v14l-22 -12zM303 912l16 10v12l-16 -10z" />
            <path class="platform" d="M895 1270L1080 1185 1090 1207 915 1288z" />
            <path class="edge" d="M905 1278L1085 1196M915 1288L1090 1207" />
            <path class="red" d="M1222 666l14 -6v18l-14 6z" />
            <path class="green" d="M1370 592l8 6M1400 640l8 -4M296 1090l8 4M328 1132l10 4" />

            <!-- view cube -->
            <g class="cube" transform="translate(840 390)">
              <ellipse cx="728" cy="106" rx="85" ry="50" />
              <ellipse class="inner" cx="728" cy="100" rx="64" ry="34" />
              <path d="M682 38L732 12 776 36 722 68z" />
              <path class="left" d="M682 38L722 68V120L685 92z" />
              <path d="M722 68L776 36 772 94 722 120z" />
              <circle cx="658" cy="125" r="9" /><circle cx="780" cy="140" r="9" />
              <text x="-6" y="5" transform="translate(712 42) rotate(-28)">SUPERIOR</text>
              <text x="0" y="0" transform="translate(728 100) rotate(-28)">FRONTAL</text>
            </g>
            <g class="navbar" transform="translate(840 390)">
              <rect x="803" y="176" width="46" height="155" rx="6" />
              <path d="M803 252h46M838 176v14M838 318v12" />
              <circle cx="825" cy="216" r="14" /><path d="M818 210h14v12h-14z" /><circle cx="840" cy="184" r="5" /><circle cx="840" cy="322" r="5" />
              <path class="zoom" d="M814 264h17v14h-17z" /><path d="M828 276l8 8M822 242h6l-3 3zM822 299h6l-3 3z" />
            </g>
          </svg>
        </div>
        <div class="vscroll"><i></i></div>
      </div>
      <div class="viewbar">
        <span>1 : 50</span>
        <div class="viewicons">
          {#each ['pattern', 'box', 'sun', 'shadow', 'teapot', 'cropx', 'crop', 'lock', 'glasses', 'bulb', 'world', 'cam', 'blocks', 'shapes', 'dims'] as name}
            <button aria-label={name}>{@render ico(name, 9)}</button>
          {/each}
        </div>
        <i class="hthumb"></i>
        <svg class="grip" width="6" height="6" viewBox="0 0 6 6" aria-hidden="true"><path d="M4 0h2v2H4zM2 2h2v2H2zM4 2h2v2H4zM0 4h2v2H0zM2 4h2v2H2zM4 4h2v2H4z" fill="#bbb" /></svg>
      </div>
    </section>

    <section class="pane schedule">
      <div class="doctabs">
        <button class="doc selected">{@render ico('grid', 9)}<b>11.1 a 9 CM de cantidades de DU...</b>{@render ico('x', 7)}</button>
        <button class="doc">{@render ico('sheet', 10)}<span>GN.0-000 - Carátula</span></button>
        <button class="menu" aria-label="Vistas">{@render ico('more', 8)}</button>
      </div>
      <div class="sheet">
        <div class="tablewrap">
          <table>
            <colgroup><col class="c1" /><col class="c1" /><col class="c3" /><col class="c1" /></colgroup>
            <caption>&lt;11.1 a 9 CM de cantidades de DURLOCK Tabiques&gt;</caption>
            <thead>
              <tr class="letters"><th>A</th><th>B</th><th>C</th><th>D</th></tr>
              <tr class="names"><th>Restricción de base</th><th>Marca de tipo</th><th>Tipo</th><th>Área</th></tr>
            </thead>
            <tbody>
              <tr class="gap"><td colspan="4"></td></tr>
              {#each groups as gr}
                {#each gr.levels as level, i}
                  <tr class:selected={gr.selected}>
                    <td class:cursor={gr.selected && i === 0}>{level}</td><td>{gr.mark}</td><td>{gr.type}</td><td>{gr.areas[i]} m²</td>
                  </tr>
                {/each}
                {#if gr.total}
                  <tr class="total"><td colspan="3"></td><td>{gr.total} m²</td></tr>
                {/if}
              {/each}
            </tbody>
          </table>
        </div>
        <div class="vscroll"><i></i></div>
      </div>
    </section>
  </main>

  <footer>
    <p>Amplíe o reduzca la vista con la tecla Ctrl + rueda del ratón o Ctrl + [+/-]. Para restablecer el nivel de zoom original (100%), pulse Ctrl + 0.</p>
    <div class="status">
      {@render ico('users', 10)}
      <select aria-label="Workset" bind:value={workset}><option>Workset1</option></select>
      {@render ico('link', 9)}<span>:0</span>
      {@render ico('option', 10)}{@render ico('pattern', 9)}
      <select aria-label="Opción de diseño" bind:value={scheme}><option>Modelo base</option></select>
      <span class="end">{@render ico('filterY', 10)}{@render ico('pick', 10)}</span>
    </div>
  </footer>
</div>

<style>
  :global(body) { margin: 0; }
  .app {
    display: flex; flex-direction: column; height: 100vh; overflow: hidden;
    background: #cbcbcb; color: #3c3c3c;
    font: 7px/9px Lato, 'Open Sans', sans-serif;
  }
  h1, h2, p { margin: 0; font: inherit; }
  button, select { font: inherit; color: inherit; border: 0; padding: 0; margin: 0; background: none; border-radius: 0; }
  a { color: inherit; text-decoration: none; }
  .ico { display: block; flex: none; }

  .titlebar { display: flex; align-items: center; height: 16px; border-top: 1px solid #a9a9a9; box-sizing: border-box; }
  .quick { display: flex; align-items: center; flex: 0 0 389px; box-sizing: border-box; }
  .quick button { display: flex; justify-content: center; align-items: center; width: 14px; }
  .quick .wide { width: 18px; }
  .quick .tiny { width: 6px; }
  .titlebar h1 { flex: 1; white-space: nowrap; color: #484848; }
  .account { display: flex; align-items: center; gap: 4px; padding-right: 28px; color: #333; }

  .tabs { display: flex; height: 12px; line-height: 12px; white-space: nowrap; gap: 10px; overflow: hidden; }
  .tabs .file { background: #2b7cb3; color: #fff; padding: 0 5px; margin-right: -4px; }
  .tabs .current { background: #e4ecd6; padding: 0 0 0 4px; margin-left: -5px; flex: 1; }

  .ribbon { display: flex; height: 54px; background: #f0f0f0; overflow: hidden; }
  .ribbon section { flex: 1 1 0; min-width: 0; display: flex; flex-direction: column; border-right: 1px solid #e2e4de; box-sizing: border-box; }
  .ribbon h2 { height: 10px; line-height: 10px; background: #e4ecd6; text-align: center; border-bottom: 1px solid #cfd3c8; white-space: nowrap; }
  .tools { flex: 1; display: flex; }
  .fields { flex: 60 1 0; display: flex; flex-direction: column; gap: 3px; padding: 3px 1px 0 2px; min-width: 0; }
  .fields select { height: 11px; }
  select {
    appearance: none; background: #fbfbfb; border: 1px solid #dedede; padding: 0 2px; color: #666; width: 100%;
    background-image: linear-gradient(45deg, transparent 50%, #444 50%), linear-gradient(-45deg, transparent 50%, #444 50%);
    background-size: 2px 2px; background-position: right 4px center, right 2px center; background-repeat: no-repeat;
  }
  .tool { flex: 1 1 0; min-width: 0; display: flex; flex-direction: column; align-items: center; padding-top: 3px; color: #b6b6b6; white-space: nowrap; position: relative; }
  .tool svg { margin-bottom: 3px; flex: none; }
  .tool.on { color: #333; }
  .tool.active { background: #c7def5; border: 1px solid #569de5; margin: 2px 1px; padding-top: 0; }
  .tool.drop::after { content: ''; position: absolute; right: 0; bottom: 10px; border: 1px solid transparent; border-top: 2px solid #777; }

  .context { height: 15px; line-height: 15px; background: #e4ecd6; padding-left: 4px; }

  main { flex: 1; display: flex; min-height: 0; }
  .pane { display: flex; flex-direction: column; min-width: 0; min-height: 0; }
  .model { flex: 573 1 0; }
  .schedule { flex: 384 1 0; margin-left: 2px; }
  .doctabs { display: flex; height: 13px; background: #cbcbcb; white-space: nowrap; }
  .doc { display: flex; align-items: center; gap: 4px; padding: 0 3px; color: #555; }
  .doc.soft { background: #ececec; width: 100px; }
  .doc.selected { background: #fff; color: #222; width: 139px; }
  .doc.selected b { flex: 1; text-align: left; }
  .menu { margin-left: auto; padding-right: 2px; }
  .stage { flex: 1; display: flex; min-height: 0; }
  .canvas { flex: 1; min-width: 0; background: #fff; overflow: hidden; }
  .iso { display: block; width: 100%; height: 100%; }
  .vscroll { flex: 0 0 9px; background: #ececec; display: flex; justify-content: center; }
  .model .vscroll i { width: 2px; height: 9px; background: #8c8c8c; align-self: center; }
  .viewbar { display: flex; align-items: center; height: 11px; background: #ececec; padding-left: 15px; }
  .viewbar span { width: 26px; }
  .viewicons { display: flex; gap: 2px; }
  .hthumb { width: 9px; height: 1px; background: #888; margin-left: auto; margin-right: 175px; }

  .sheet { flex: 1; display: flex; min-height: 0; margin-bottom: 2px; }
  .tablewrap { flex: 1; overflow: hidden; padding-right: 18px; border-left: 1px solid #777; }
  .sheet .vscroll { margin-right: 4px; align-items: flex-start; }
  .sheet .vscroll i { width: 2px; height: 71%; margin-top: 10px; background: #999; }

  table { width: 100%; border-collapse: collapse; table-layout: fixed; font: 6px/10px 'Liberation Sans', Arial, sans-serif; color: #222; }
  caption { background: #fff; height: 27px; line-height: 28px; border: 1px solid #666; border-left: 0; border-bottom: 0; box-sizing: border-box; }
  .c1 { width: 64px; }
  .c3 { width: auto; }
  th, td { padding: 0 1px; height: 10px; white-space: nowrap; text-align: left; overflow: hidden; }
  td { background: #fff; border: 1px solid #bdbdbd; }
  th { text-align: center; font-weight: 400; background: #fff; border: 1px solid #666; }
  .letters th { background: #ececec; font-weight: 700; font-size: 7px; }
  .gap td, .total td { background: #cbcbcb; border-color: #cbcbcb; height: 9px; line-height: 9px; }
  .total td { border-top: 1px solid #666; border-bottom: 1px solid #666; }
  .gap td { border-bottom: 1px solid #555; border-top: 1px solid #555; }
  .selected td { background: #000; color: #ddd; border-color: #444; }
  .selected td.cursor { background: #fff; color: #222; }

  footer { display: flex; align-items: center; height: 12px; background: #cfcfcf; color: #333; }
  footer p { flex: 503 1 0; white-space: nowrap; min-width: 0; }
  .status { flex: 456 1 0; display: flex; align-items: center; gap: 3px; min-width: 0; }
  .status select { flex: 0 0 115px; height: 11px; border-color: #e4e4e4; background-color: #fff; color: #333; }
  .status span { padding-right: 4px; }
  .status .end { display: flex; gap: 3px; margin-left: auto; }

  .ground { fill: #f1f1ea; stroke: none; }
  .body { fill: #fff; stroke: none; }
  .floor { fill: #f4f4f4; stroke: #555; stroke-width: 2; }
  .glass { fill: #f1f1f1; stroke: #161616; stroke-width: 4; }
  .plain { fill: #fdfdfd; stroke: #444; stroke-width: 2; }
  .dense { fill: #f0f0f0; stroke: #222; stroke-width: 2; }
  .cap { fill: none; stroke: #2a2a2a; stroke-width: 3; }
  .cut { fill: none; stroke: #3a3a3a; stroke-width: 4; }
  .rail { fill: #f7f7f7; stroke: #444; stroke-width: 2; }
  .wallband { fill: #fff; stroke: #4a4a4a; stroke-width: 2; }
  .hall { fill: #f1f1f1; stroke: #333; stroke-width: 2; }
  .stair { fill: #444; stroke: #777; stroke-width: 2; }
  .tan { fill: #dccbb5; stroke: #3c3630; stroke-width: 3; }
  .board { fill: none; stroke: #c4b196; stroke-width: 1; }
  .recess { fill: #f4f4f4; stroke: none; }
  .black { fill: #060606; stroke: #000; stroke-width: 2; }
  .slot { fill: none; stroke: #e8e8e8; stroke-width: 3; }
  .blue { fill: #7c9ade; stroke: #1f4fc4; stroke-width: 3; }
  .shaft { fill: #d5d5d5; stroke: #111; stroke-width: 3; }
  .platform { fill: #f4f4f4; stroke: #222; stroke-width: 3; }
  .edge { fill: none; stroke: #222; stroke-width: 3; }
  .line { fill: none; stroke: #333; stroke-width: 2; }
  .red { fill: #b5372c; stroke: #222; stroke-width: 3; }
  .green { fill: none; stroke: #2fb54a; stroke-width: 4; }
  .cube { fill: #ececec; stroke: #b5b5b5; stroke-width: 3; }
  .cube .inner { fill: #fff; stroke: #d0d0d0; }
  .cube .left { fill: #d9d9d9; }
  .cube text { font: 11px 'Liberation Sans', sans-serif; fill: #888; stroke: none; }
  .navbar { fill: #f4f4f4; stroke: #b8b8b8; stroke-width: 3; }
  .navbar .zoom { fill: #8fc07a; stroke: #7aa868; }
</style>
